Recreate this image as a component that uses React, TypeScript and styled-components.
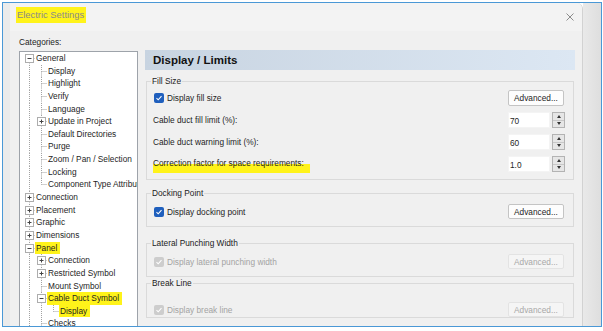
import { FC } from 'react'
import styled, { createGlobalStyle } from 'styled-components'

const GlobalStyle = createGlobalStyle`
  body {
    margin: 0;
    background: #ffffff;
    font-family: "Liberation Sans", Arial, sans-serif;
    color: #1e1e1e;
  }
`

const Page = styled.div`
  width: 603px;
  height: 331px;
  padding: 2px 0 0 2px;
  box-sizing: border-box;
  overflow: hidden;
`

const Frame = styled.div`
  width: 600px;
  height: 325px;
  box-sizing: border-box;
  border: 1px solid #4a98d6;
  display: flex;
  overflow: hidden;
`

const Dialog = styled.div`
  width: 580px;
  flex-shrink: 0;
  box-sizing: border-box;
  display: flex;
  flex-direction: column;
  background: #f0f0f0;
  border-left: 7px solid #ebebeb;
  border-right: 1px solid #d2d2d2;
  border-top-right-radius: 6px;
  overflow: hidden;
`

const SideStrip = styled.div`
  flex: 1;
  background: linear-gradient(to right, #e9e9e9, #dedede);
`

const TitleBar = styled.div`
  height: 28px;
  flex-shrink: 0;
  display: flex;
  justify-content: space-between;
  align-items: flex-start;
  padding: 4px 8px 0 6px;
  box-sizing: border-box;
  background: #f3f3f3;
`

const Title = styled.span`
  font-size: 9.4px;
  line-height: 16px;
  padding: 0 2px 0 1px;
  color: #8a8a8a;
  background: #fff31a;
`

const Close = styled.svg`
  margin-top: 6px;
`

const Body = styled.div`
  flex: 1;
  display: flex;
  align-items: flex-start;
  padding-left: 9px;
  overflow: hidden;
`

const LeftCol = styled.div`
  width: 119px;
  flex-shrink: 0;
  padding-top: 5px;
`

const Caption = styled.div`
  font-size: 8.3px;
  line-height: 12px;
  margin-bottom: 3px;
`

const Tree = styled.div`
  height: 300px;
  box-sizing: border-box;
  border: 1px solid #9ea3aa;
  border-bottom: none;
  background: #ffffff;
  overflow: hidden;
`

const TreeRow = styled.div`
  height: 12.65px;
  display: flex;
  align-items: stretch;
  white-space: nowrap;
`

const TreeLabel = styled.span<{ $mark?: boolean }>`
  font-size: 8.3px;
  line-height: 12.65px;
  padding: 0 3px 0 1px;
  background: ${p => (p.$mark ? '#fff31a' : 'transparent')};
`

const RightCol = styled.div`
  width: 430px;
  margin-left: 7px;
  padding-top: 19px;
`

const Header = styled.div`
  height: 20px;
  padding: 1px 0 0 8px;
  box-sizing: border-box;
  line-height: 19px;
  font-size: 11.5px;
  font-weight: bold;
  color: #111;
  background: linear-gradient(to right, #c8d4e1, #dce7f3);
`

const Group = styled.fieldset<{ $top: number }>`
  margin: ${p => p.$top}px 1px 0;
  padding: 0 9px ${p => (p.$top === 0 ? 0 : 7)}px 7px;
  min-width: 0;
  border: 1px solid #dadada;
`

const Legend = styled.legend`
  font-size: 8.3px;
  line-height: 12px;
  padding: 0 1px;
  margin-left: -3px;
  color: #222;
`

const Row = styled.div<{ $top: number; $h?: number }>`
  display: flex;
  align-items: center;
  height: ${p => p.$h ?? 15}px;
  margin-top: ${p => p.$top}px;
  font-size: 8.3px;
`

const Label = styled.span<{ $mark?: boolean; $off?: boolean }>`
  flex: 1;
  margin-left: -1px;
  color: ${p => (p.$off ? '#a3a3a3' : '#1e1e1e')};
  ${p => p.$mark && `
    flex: none;
    margin-right: auto;
    padding: 0 6px 5px 0;
    margin-top: 3px;
    background: linear-gradient(#f0f0f0 42%, #fff31a 42%);
  `}
`

const CheckLabel = styled.label<{ $off?: boolean }>`
  flex: 1;
  display: flex;
  align-items: center;
  gap: 3px;
  color: ${p => (p.$off ? '#a3a3a3' : '#1e1e1e')};
`

const Box = styled.span<{ $off?: boolean }>`
  width: 10px;
  height: 10px;
  border-radius: 2px;
  display: flex;
  align-items: center;
  justify-content: center;
  background: ${p => (p.$off ? '#cdcdcd' : '#1f5fbd')};
`

const Button = styled.button<{ $off?: boolean }>`
  width: 56px;
  height: 100%;
  padding: 0;
  font-family: inherit;
  font-size: 8.3px;
  border-radius: 2px;
  border: 1px solid ${p => (p.$off ? '#e3e3e3' : '#c4c4c4')};
  background: ${p => (p.$off ? '#f5f5f5' : '#fdfdfd')};
  color: ${p => (p.$off ? '#a8a8a8' : '#1e1e1e')};
`

const NumBox = styled.div`
  display: flex;
  height: 16px;
  gap: 2px;
  margin-right: -1px;
`

const NumInput = styled.div`
  width: 42px;
  box-sizing: border-box;
  padding-left: 1px;
  line-height: 16px;
  background: #ffffff;
  border: 1px solid #f4f4f4;
`

const Spin = styled.div`
  width: 13px;
  box-sizing: border-box;
  display: flex;
  flex-direction: column;
  border: 1px solid #b3b3b3;
  background: #e6e6e6;
`

const SpinHalf = styled.div<{ $down?: boolean }>`
  flex: 1;
  display: flex;
  align-items: center;
  justify-content: center;
  border-top: ${p => (p.$down ? '1px solid #c8c8c8' : 'none')};
  &::after {
    content: '';
    border-left: 2.5px solid transparent;
    border-right: 2.5px solid transparent;
    ${p => (p.$down ? 'border-top: 3px solid #333;' : 'border-bottom: 3px solid #333;')}
  }
`

type TNode = { label: string; depth: number; exp?: '+' | '-'; mark?: boolean }

const nodes: TNode[] = [
  { label: 'General', depth: 0, exp: '-' },
  { label: 'Display', depth: 1 },
  { label: 'Highlight', depth: 1 },
  { label: 'Verify', depth: 1 },
  { label: 'Language', depth: 1 },
  { label: 'Update in Project', depth: 1, exp: '+' },
  { label: 'Default Directories', depth: 1 },
  { label: 'Purge', depth: 1 },
  { label: 'Zoom / Pan / Selection', depth: 1 },
  { label: 'Locking', depth: 1 },
  { label: 'Component Type Attributes', depth: 1 },
  { label: 'Connection', depth: 0, exp: '+' },
  { label: 'Placement', depth: 0, exp: '+' },
  { label: 'Graphic', depth: 0, exp: '+' },
  { label: 'Dimensions', depth: 0, exp: '+' },
  { label: 'Panel', depth: 0, exp: '-', mark: true },
  { label: 'Connection', depth: 1, exp: '+' },
  { label: 'Restricted Symbol', depth: 1, exp: '+' },
  { label: 'Mount Symbol', depth: 1 },
  { label: 'Cable Duct Symbol', depth: 1, exp: '-', mark: true },
  { label: 'Display', depth: 2, mark: true },
  { label: 'Checks', depth: 1 },
]

// the list is cut off at the bottom, so open branches keep going
const hasNext = (i: number) => {
  const d = nodes[i].depth
  for (let j = i + 1; j < nodes.length; j++) {
    if (nodes[j].depth < d) return false
    if (nodes[j].depth === d) return true
  }
  return true
}

const ancestorAt = (i: number, k: number) => {
  for (let j = i - 1; j >= 0; j--) if (nodes[j].depth === k) return j
  return -1
}

const ROW_H = 12.65

const Gutter: FC<{ i: number }> = ({ i }) => {
  const { depth, exp } = nodes[i]
  const w = 15 + 12 * depth
  const cx = 9.5 + 12 * depth
  const mid = 6.5
  const dot = { stroke: '#a2a2a2', strokeWidth: 1, strokeDasharray: '1 1' }
  const lines = []
  for (let k = 0; k < depth; k++) {
    if (hasNext(ancestorAt(i, k))) {
      const x = 9.5 + 12 * k
      lines.push(<line key={k} x1={x} y1={0} x2={x} y2={ROW_H} {...dot} />)
    }
  }
  return (
    <svg width={w} height={ROW_H} style={{ flexShrink: 0 }}>
      {lines}
      {i > 0 && <line x1={cx} y1={0} x2={cx} y2={mid} {...dot} />}
      {hasNext(i) && <line x1={cx} y1={mid} x2={cx} y2={ROW_H} {...dot} />}
      <line x1={cx} y1={mid} x2={w} y2={mid} {...dot} />
      {exp && (
        <g>
          <rect x={cx - 4} y={2.5} width={8} height={8} fill="#fff" stroke="#adadad" />
          <line x1={cx - 2} y1={mid} x2={cx + 2} y2={mid} stroke="#444" />
          {exp === '+' && <line x1={cx} y1={4.5} x2={cx} y2={8.5} stroke="#444" />}
        </g>
      )}
    </svg>
  )
}

const Check: FC<{ off?: boolean; children: string }> = ({ off, children }) => (
  <CheckLabel $off={off}>
    <Box $off={off}>
      <svg width="8" height="8" viewBox="0 0 8 8">
        <polyline points="1.5,4.2 3.2,5.8 6.5,2.2" fill="none" stroke="#fff" strokeWidth="1.1" />
      </svg>
    </Box>
    {children}
  </CheckLabel>
)

const Num: FC<{ value: string }> = ({ value }) => (
  <NumBox>
    <NumInput>{value}</NumInput>
    <Spin>
      <SpinHalf />
      <SpinHalf $down />
    </Spin>
  </NumBox>
)

const App: FC = () => (
  <Page>
    <GlobalStyle />
    <Frame>
      <Dialog>
        <TitleBar>
          <Title>Electric Settings</Title>
          <Close width="8" height="8" viewBox="0 0 8 8">
            <path d="M0.5 0.5 L7.5 7.5 M7.5 0.5 L0.5 7.5" stroke="#8c8c8c" strokeWidth="1" />
          </Close>
        </TitleBar>
        <Body>
          <LeftCol>
            <Caption>Categories:</Caption>
            <Tree>
              {nodes.map((n, i) => (
                <TreeRow key={i}>
                  <Gutter i={i} />
                  <TreeLabel $mark={n.mark}>{n.label}</TreeLabel>
                </TreeRow>
              ))}
            </Tree>
          </LeftCol>
          <RightCol>
            <Header>Display / Limits</Header>
            <Group $top={5}>
              <Legend>Fill Size</Legend>
              <Row $top={3} $h={16}>
                <Check>Display fill size</Check>
                <Button>Advanced...</Button>
              </Row>
              <Row $top={6} $h={16}>
                <Label>Cable duct fill limit (%):</Label>
                <Num value="70" />
              </Row>
              <Row $top={6} $h={16}>
                <Label>Cable duct warning limit (%):</Label>
                <Num value="60" />
              </Row>
              <Row $top={6} $h={16}>
                <Label $mark>Correction factor for space requirements:</Label>
                <Num value="1.0" />
              </Row>
            </Group>
            <Group $top={7}>
              <Legend>Docking Point</Legend>
              <Row $top={5}>
                <Check>Display docking point</Check>
                <Button>Advanced...</Button>
              </Row>
            </Group>
            <Group $top={10}>
              <Legend>Lateral Punching Width</Legend>
              <Row $top={5}>
                <Check off>Display lateral punching width</Check>
                <Button $off disabled>Advanced...</Button>
              </Row>
            </Group>
            <Group $top={0}>
              <Legend>Break Line</Legend>
              <Row $top={13}>
                <Check off>Display break line</Check>
                <Button $off disabled>Advanced...</Button>
              </Row>
            </Group>
          </RightCol>
        </Body>
      </Dialog>
      <SideStrip />
    </Frame>
  </Page>
)

export default App
